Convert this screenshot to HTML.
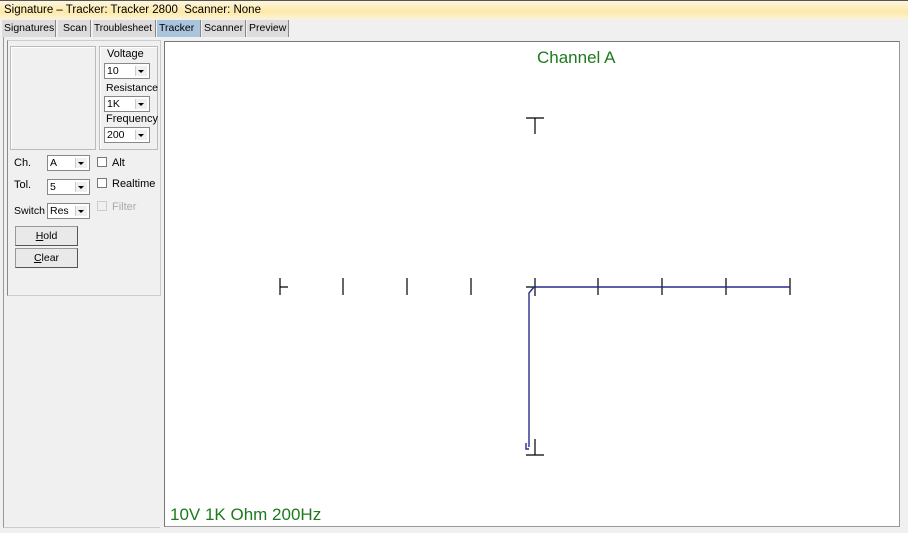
<!DOCTYPE html>
<html><head><style>
body{margin:0;width:908px;height:533px;background:#f0f0f0;font-family:"Liberation Sans",sans-serif;font-size:11px;position:relative;overflow:hidden;color:#000}
.a{position:absolute}
.title{left:0;top:0;width:908px;height:19px;background:linear-gradient(#fdf6df,#fde9a8 60%,#fdf3d6);border-top:1px solid #555;box-sizing:border-box;font-size:11.5px;line-height:18px;padding-left:4px}
.tab{top:20px;height:17px;line-height:17px;background:#dcdcdc;border-right:1px solid #888;padding:0 2px;font-size:10.5px;box-sizing:border-box;white-space:nowrap;overflow:hidden}
.grp{border:1px solid #bbb;box-shadow:inset 1px 1px 0 #fff}
.cb{background:#fff;border:1px solid #888;height:16px;box-sizing:border-box;font-size:10.5px;line-height:14px;padding-left:2px}
.cb:after{content:"";position:absolute;right:2px;top:2px;width:11px;height:10px;background:#f0f0f0;border-left:1px solid #ccc}
.arr{position:absolute;right:5px;top:6px;width:0;height:0;border-left:3px solid transparent;border-right:3px solid transparent;border-top:3px solid #000;z-index:2}
.chk{width:10px;height:10px;border:1px solid #777;background:#fff;box-sizing:border-box}
.btn{border:1px solid #999;border-right-color:#555;border-bottom-color:#555;background:#e9e9e9;text-align:center;font-size:10.5px;line-height:18px;box-sizing:border-box}
</style></head><body>
<div class="a title">Signature – Tracker: Tracker 2800&nbsp; Scanner: None</div>
<div class="a tab" style="left:2px;width:54px">Signatures</div>
<div class="a tab" style="left:58px;width:33px;padding-left:5px">Scan</div>
<div class="a tab" style="left:93px;width:63px;padding:0 1px;font-size:10px">Troublesheet</div>
<div class="a tab" style="left:157px;width:44px;background:#a9c4dc">Tracker</div>
<div class="a tab" style="left:202px;width:44px">Scanner</div>
<div class="a tab" style="left:247px;width:42px">Preview</div>
<div class="a" style="left:3px;top:37px;width:156px;height:490px;border-left:1px solid #999;border-bottom:1px solid #ccc"></div>
<div class="a" style="left:7px;top:40px;width:152px;height:254px;border:1px solid #ccc;border-left:1px solid #888"></div>
<div class="a grp" style="left:10px;top:46px;width:84px;height:102px"></div>
<div class="a grp" style="left:99px;top:46px;width:57px;height:102px"></div>
<div class="a" style="left:107px;top:48px">Voltage</div>
<div class="a cb" style="left:104px;top:63px;width:46px">10<span class="arr"></span></div>
<div class="a" style="left:106px;top:82px;font-size:10.5px">Resistance</div>
<div class="a cb" style="left:104px;top:96px;width:46px">1K<span class="arr"></span></div>
<div class="a" style="left:106px;top:113px">Frequency</div>
<div class="a cb" style="left:104px;top:127px;width:46px">200<span class="arr"></span></div>
<div class="a" style="left:14px;top:157px">Ch.</div>
<div class="a cb" style="left:47px;top:155px;width:43px">A<span class="arr"></span></div>
<div class="a" style="left:14px;top:179px">Tol.</div>
<div class="a cb" style="left:47px;top:179px;width:43px">5<span class="arr"></span></div>
<div class="a" style="left:14px;top:205px;font-size:10.5px">Switch</div>
<div class="a cb" style="left:47px;top:203px;width:43px">Res<span class="arr"></span></div>
<div class="a chk" style="left:97px;top:157px"></div><div class="a" style="left:112px;top:157px">Alt</div>
<div class="a chk" style="left:97px;top:178px"></div><div class="a" style="left:112px;top:178px">Realtime</div>
<div class="a chk" style="left:97px;top:201px;border-color:#ccc;background:#f0f0f0"></div><div class="a" style="left:112px;top:201px;color:#aaa">Filter</div>
<div class="a btn" style="left:15px;top:226px;width:63px;height:20px"><u>H</u>old</div>
<div class="a btn" style="left:15px;top:248px;width:63px;height:20px"><u>C</u>lear</div>
<div class="a" style="left:164px;top:41px;width:736px;height:486px;background:#fff;border:1px solid #999;border-top-color:#777;border-left-color:#777;box-sizing:border-box"></div>
<div class="a" style="left:537px;top:48px;color:#1d7a1d;font-size:17px">Channel A</div>
<div class="a" style="left:170px;top:505px;color:#1d7a1d;font-size:17px">10V 1K Ohm 200Hz</div>
<svg class="a" style="left:0;top:0" width="908" height="533">
<g stroke="#000" stroke-width="1.2" fill="none">
<path d="M526 118H544M535 118V134"/>
<path d="M280 278V295M280 287H288"/>
<path d="M343 278V295M407 278V295M471 278V295M598 278V295M662 278V295M726 278V295M790 278V295"/>
<path d="M526 287H536M535 278V296"/>
<path d="M526 455H544M535 439V455"/>
</g>
<path d="M790 287H534L529 293V447" stroke="#2a2a8a" stroke-width="1.4" fill="none"/>
<path d="M526 443v6h3" stroke="#2a2a8a" stroke-width="1.4" fill="none"/>
</svg>
</body></html>
